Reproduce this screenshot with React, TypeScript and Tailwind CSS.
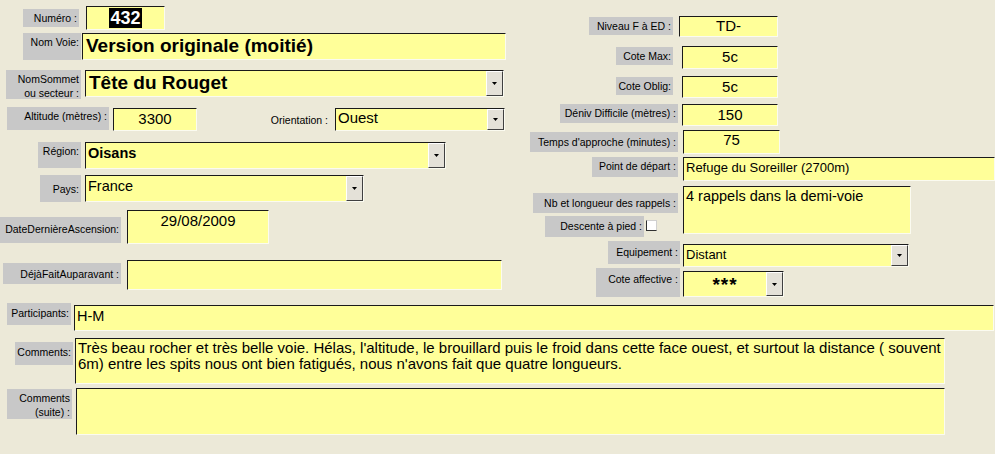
import React from "react";

const labelBase =
  "bg-[#c8c8c8] text-[10.5px] leading-[14px] text-black text-right pr-[2px] pt-[2px] shrink-0 box-border whitespace-nowrap";
const fieldBase =
  "relative bg-[#ffff99] border border-t-[#1a1a1a] border-l-[#1a1a1a] border-b-[#fbfbf0] border-r-[#fbfbf0] shrink-0 box-border overflow-hidden text-black";

function Label({ className, children }: { className: string; children: React.ReactNode }) {
  return <div className={`${labelBase} ${className}`}>{children}</div>;
}

function Drop() {
  return (
    <div className="absolute right-0 top-0 bottom-0 w-[17px] bg-[#e4e1d8] border border-t-[#ffffff] border-l-[#ffffff] border-b-[#404040] border-r-[#404040] flex items-center justify-center box-border">
      <svg width="5" height="3" viewBox="0 0 5 3">
        <path d="M0 0 H5 L2.5 3 Z" fill="#000" />
      </svg>
    </div>
  );
}

function Field({
  className,
  children,
  drop,
}: {
  className: string;
  children?: React.ReactNode;
  drop?: boolean;
}) {
  return (
    <div className={`${fieldBase} ${className}`}>
      {children}
      {drop && <Drop />}
    </div>
  );
}

export default function App() {
  return (
    <div className="w-[995px] h-[454px] bg-[#ece9d8] overflow-hidden font-['Liberation_Sans',Arial,sans-serif] text-black">
      {/* top section */}
      <div className="flex h-[297px]">
        {/* left column */}
        <div className="w-[510px] shrink-0 flex flex-col">
          {/* Numéro */}
          <div className="flex items-start h-[24px] mt-[6px]">
            <Label className="ml-[23px] mt-[3px] w-[56px] h-[18px]">Numéro :</Label>
            <Field className="ml-[7px] w-[79px] h-[24px] flex justify-center items-start pt-[1px]">
              <span className="bg-black text-white font-bold text-[18px] leading-[20px] px-[1px]">432</span>
            </Field>
          </div>
          {/* Nom Voie */}
          <div className="flex items-start h-[27px] mt-[3px]">
            <Label className="ml-[23px] w-[58px] h-[27px]">Nom Voie:</Label>
            <Field className="ml-[1px] w-[424px] h-[27px] pl-[3px] font-bold text-[19px] leading-[24px]">
              Version originale (moitié)
            </Field>
          </div>
          {/* NomSommet */}
          <div className="flex items-start h-[29px] mt-[10px]">
            <Label className="ml-[6px] w-[75px] h-[29px] leading-[12px]">
              NomSommet
              <br />
              ou secteur :
            </Label>
            <Field drop className="ml-[4px] w-[419px] h-[27px] pl-[3px] font-bold text-[19px] leading-[24px]">
              Tête du Rouget
            </Field>
          </div>
          {/* Altitude / Orientation */}
          <div className="flex items-start h-[24px] mt-[8px]">
            <Label className="ml-[7px] w-[102px] h-[23px]">Altitude (mètres) :</Label>
            <Field className="ml-[4px] mt-[1px] w-[84px] h-[23px] text-center text-[15px] leading-[20px]">
              3300
            </Field>
            <div className="ml-[69px] mt-[6px] w-[64px] text-right text-[10.5px] leading-[14px] pr-[2px] whitespace-nowrap">
              Orientation :
            </div>
            <Field drop className="ml-[5px] mt-[1px] w-[170px] h-[23px] pl-[2px] text-[15px] leading-[18px]">
              Ouest
            </Field>
          </div>
          {/* Région */}
          <div className="flex items-start h-[27px] mt-[11px]">
            <Label className="ml-[38px] w-[43px] h-[26px]">Région:</Label>
            <Field drop className="ml-[4px] w-[361px] h-[27px] pl-[2px] font-bold text-[14.5px] leading-[20px]">
              Oisans
            </Field>
          </div>
          {/* Pays */}
          <div className="flex items-start h-[27px] mt-[6px]">
            <Label className="ml-[40px] w-[41px] h-[27px] pt-[7px]">Pays:</Label>
            <Field drop className="ml-[4px] w-[279px] h-[27px] pl-[2px] text-[14.5px] leading-[20px]">
              France
            </Field>
          </div>
          {/* Date */}
          <div className="flex items-start h-[34px] mt-[8px]">
            <Label className="ml-0 mt-[7px] w-[121px] h-[26px] pt-[5px]">DateDernièreAscension:</Label>
            <Field className="ml-[6px] w-[142px] h-[34px] text-center text-[15px] leading-[20px]">
              29/08/2009
            </Field>
          </div>
          {/* DéjàFait */}
          <div className="flex items-start h-[30px] mt-[16px]">
            <Label className="ml-[3px] mt-[3px] w-[118px] h-[21px] pt-[4px]">DéjàFaitAuparavant :</Label>
            <Field className="ml-[6px] w-[375px] h-[30px]" />
          </div>
        </div>

        {/* right column */}
        <div className="flex-1 flex flex-col">
          <div className="flex items-start h-[21px] mt-[16px]">
            <Label className="ml-[79px] mt-[1px] w-[84px] h-[18px]">Niveau F à ED :</Label>
            <Field className="ml-[6px] w-[99px] h-[21px] text-center text-[15px] leading-[18px]">TD-</Field>
          </div>
          <div className="flex items-start h-[23px] mt-[9px]">
            <Label className="ml-[106px] mt-[1px] w-[57px] h-[18px]">Cote Max:</Label>
            <Field className="ml-[9px] w-[96px] h-[23px] text-center text-[15px] leading-[20px]">5c</Field>
          </div>
          <div className="flex items-start h-[22px] mt-[7px]">
            <Label className="ml-[106px] mt-[1px] w-[57px] h-[18px]">Cote Oblig:</Label>
            <Field className="ml-[9px] w-[96px] h-[22px] text-center text-[15px] leading-[20px]">5c</Field>
          </div>
          <div className="flex items-start h-[22px] mt-[6px]">
            <Label className="ml-[50px] w-[118px] h-[19px]">Déniv Difficile (mètres) :</Label>
            <Field className="ml-[4px] w-[96px] h-[22px] text-center text-[15px] leading-[19px]">150</Field>
          </div>
          <div className="flex items-start h-[24px] mt-[4px]">
            <Label className="ml-[20px] mt-[2px] w-[148px] h-[20px] pt-[3px]">Temps d'approche (minutes) :</Label>
            <Field className="ml-[5px] w-[97px] h-[24px] text-center text-[15px] leading-[18px]">75</Field>
          </div>
          <div className="flex items-start h-[24px] mt-[3px]">
            <Label className="ml-[82px] w-[86px] h-[20px]">Point de départ :</Label>
            <Field className="ml-[5px] w-[312px] h-[24px] pl-[2px] text-[13px] leading-[20px]">
              Refuge du Soreiller (2700m)
            </Field>
          </div>
          <div className="flex items-start h-[48px] mt-[5px]">
            <div className="w-[168px] shrink-0 flex flex-col">
              <Label className="ml-[23px] mt-[7px] w-[145px] h-[20px] pt-[3px]">Nb et longueur des rappels :</Label>
              <div className="flex items-start mt-[3px]">
                <Label className="ml-[35px] w-[99px] h-[21px] pt-[3px]">Descente à pied :</Label>
                <div className="ml-[2px] mt-[4px] w-[11px] h-[11px] bg-white border border-t-[#d0d0d0] border-r-[#d0d0d0] border-l-[#303030] border-b-[#303030] box-border" />
              </div>
            </div>
            <Field className="ml-[5px] w-[228px] h-[48px] pl-[2px] text-[14.5px] leading-[18px]">
              4 rappels dans la demi-voie
            </Field>
          </div>
          <div className="flex items-start h-[26px] mt-[7px]">
            <Label className="ml-[98px] w-[72px] h-[23px] pt-[4px]">Equipement :</Label>
            <Field drop className="ml-[3px] mt-[3px] w-[226px] h-[23px] pl-[2px] text-[13px] leading-[19px]">
              Distant
            </Field>
          </div>
          <div className="flex items-start h-[29px] mt-[1px]">
            <Label className="ml-[86px] w-[84px] h-[29px] pt-[4px]">Cote affective :</Label>
            <Field drop className="ml-[3px] mt-[3px] w-[101px] h-[26px] pr-[17px] text-center font-bold text-[19px] leading-[26px] tracking-[1px]">
              ***
            </Field>
          </div>
        </div>
      </div>

      {/* bottom section */}
      <div className="flex items-start h-[28px] mt-[6px]">
        <Label className="ml-[7px] w-[64px] h-[22px] pt-[3px]">Participants:</Label>
        <Field className="ml-[3px] mt-[2px] w-[920px] h-[26px] pl-[2px] text-[14.5px] leading-[20px]">H-M</Field>
      </div>
      <div className="flex items-start h-[46px] mt-[7px]">
        <Label className="ml-[15px] mt-[4px] w-[58px] h-[23px] pt-[3px]">Comments:</Label>
        <Field className="ml-[2px] w-[870px] h-[46px] pl-[2px] pt-[1px] text-[15px] leading-[16px] whitespace-nowrap">
          Très beau rocher et très belle voie. Hélas, l'altitude, le brouillard puis le froid dans cette face ouest, et surtout la distance ( souvent
          <br />
          6m) entre les spits nous ont bien fatigués, nous n'avons fait que quatre longueurs.
        </Field>
      </div>
      <div className="flex items-start h-[47px] mt-[4px]">
        <Label className="ml-[7px] mt-[1px] w-[65px] h-[30px] leading-[13px]">
          Comments
          <br />
          (suite) :
        </Label>
        <Field className="ml-[4px] w-[869px] h-[47px]" />
      </div>
    </div>
  );
}
